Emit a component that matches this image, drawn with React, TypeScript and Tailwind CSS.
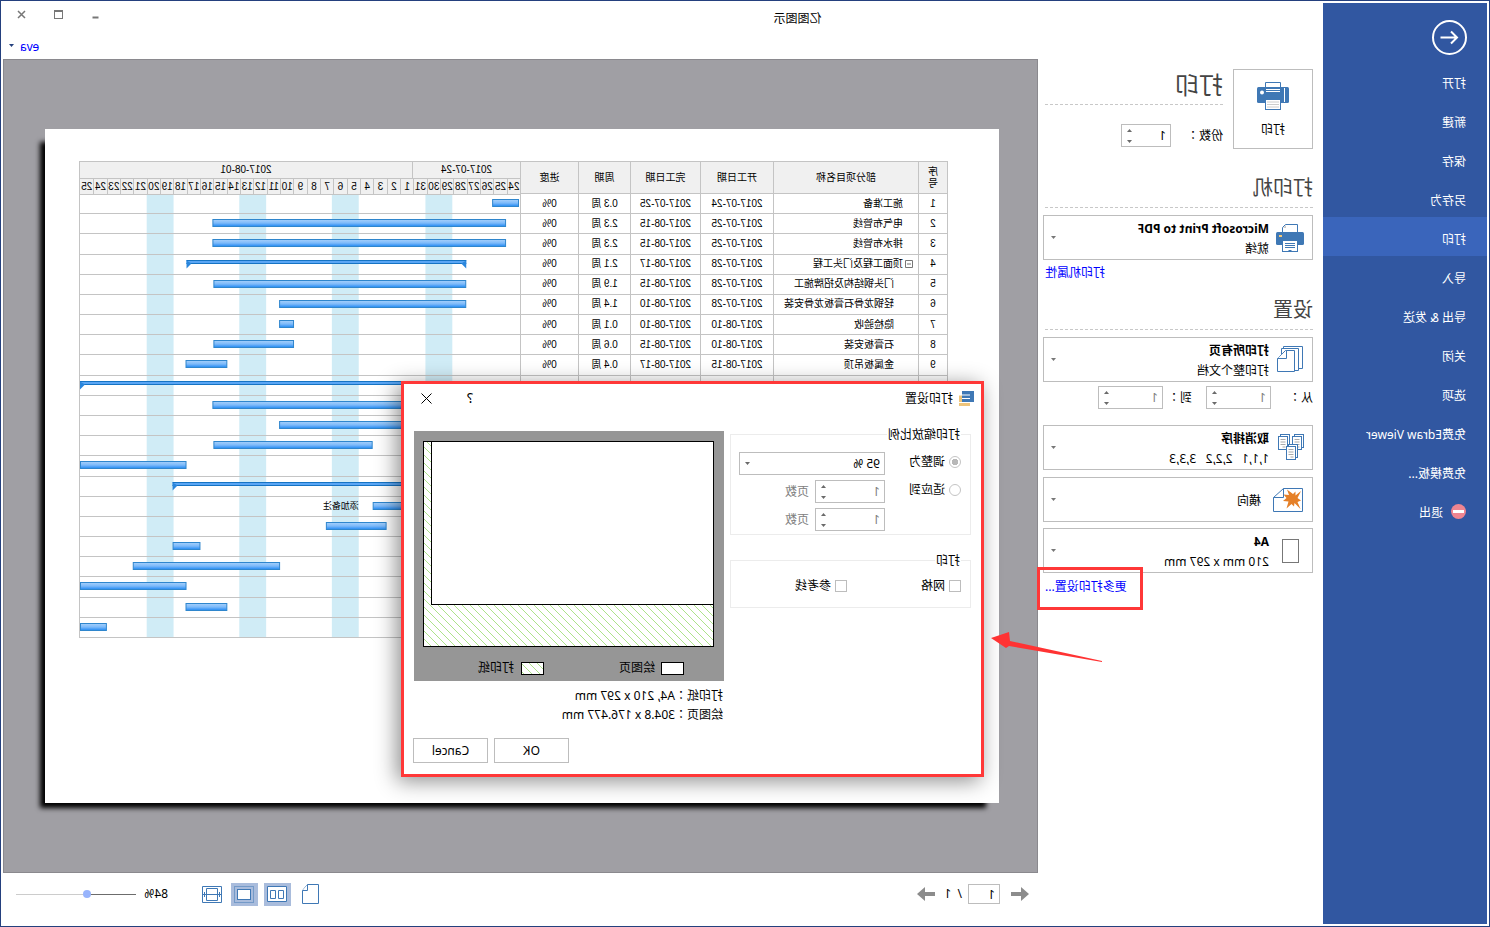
import React from "react";
import type { ReactNode } from "react";
import clsx from "clsx";

const menu = [
  "打开",
  "新建",
  "保存",
  "另存为",
  "打印",
  "导入",
  "导出 & 发送",
  "关闭",
  "选项",
  "免费Edraw Viewer",
  "免费模板...",
];

type Task = {
  name?: string;
  level?: number;
  start?: string;
  end?: string;
  weeks?: string;
  // bar limits, in chart units (442 = 33 days)
  bar: [number, number];
  group?: boolean;
  note?: string;
};

const tasks: Task[] = [
  { name: "施工准备", start: "2017-07-24", end: "2017-07-25", weeks: "0.3 周", bar: [1, 28] },
  { name: "电气布管线", start: "2017-07-25", end: "2017-08-15", weeks: "2.3 周", bar: [14, 309] },
  { name: "排水布管线", start: "2017-07-25", end: "2017-08-15", weeks: "2.3 周", bar: [14, 309] },
  { name: "顶面工程及门头工程", start: "2017-07-28", end: "2017-08-17", weeks: "2.1 周", bar: [54, 335], group: true },
  { name: "门头钢结构及招牌施工", level: 1, start: "2017-07-28", end: "2017-08-15", weeks: "1.9 周", bar: [54, 308] },
  { name: "轻钢龙骨石膏板龙骨安装", level: 1, start: "2017-07-28", end: "2017-08-10", weeks: "1.4 周", bar: [54, 242] },
  { name: "隐检验收", level: 1, start: "2017-08-10", end: "2017-08-10", weeks: "0.1 周", bar: [227, 242] },
  { name: "石膏板安装", level: 1, start: "2017-08-10", end: "2017-08-15", weeks: "0.6 周", bar: [227, 308] },
  { name: "金属板吊顶", level: 1, start: "2017-08-15", end: "2017-08-17", weeks: "0.4 周", bar: [294, 336] },
  { bar: [14, 442], group: true },
  { bar: [60, 309] },
  { bar: [60, 242] },
  { bar: [148, 308] },
  { bar: [335, 442] },
  { bar: [100, 349], group: true },
  { bar: [100, 148], note: "添加备注" },
  { bar: [134, 195] },
  { bar: [321, 349] },
  { bar: [241, 389] },
  { bar: [335, 442] },
  { bar: [294, 336] },
  { bar: [415, 442] },
];

const days = [
  ...Array.from({ length: 8 }, (_, i) => 24 + i),
  ...Array.from({ length: 25 }, (_, i) => 1 + i),
];

const weekends = [68, 162, 255, 348];

const Caret = ({ up, className }: { up?: boolean; className?: string }) => (
  <svg viewBox="0 0 5 3" className={clsx("w-[5px] h-[3px]", className)}>
    <path d={up ? "M0 3L2.5 0L5 3Z" : "M0 0H5L2.5 3Z"} fill="currentColor" />
  </svg>
);

const Spin = ({
  id,
  label,
  className,
  disabled,
}: {
  id: string;
  label?: string;
  className: string;
  disabled?: boolean;
}) => (
  <div
    className={clsx(
      "flex h-[23px] shrink-0 border border-[#bdbdbd] bg-white",
      className
    )}
  >
    <input
      id={id}
      aria-label={label}
      type="number"
      defaultValue={1}
      className={clsx(
        "min-w-0 flex-1 pl-1 outline-none [appearance:textfield] [&::-webkit-inner-spin-button]:appearance-none",
        disabled ? "text-[#808080]" : "text-black"
      )}
    />
    <div className="flex w-4 flex-col items-center justify-between py-[3px] text-[#6a6a6a]">
      <button aria-label="增加" className="flex h-1 w-4 items-center justify-center">
        <Caret up />
      </button>
      <button aria-label="减少" className="flex h-1 w-4 items-center justify-center">
        <Caret />
      </button>
    </div>
  </div>
);

const Combo = ({
  icon,
  title,
  text,
  className,
}: {
  icon: ReactNode;
  title?: string;
  text?: string;
  className?: string;
}) => (
  <button
    aria-haspopup="listbox"
    className={clsx(
      "flex h-[45px] w-full items-center border border-[#bdbdbd] bg-white pr-[7px] text-left",
      className
    )}
  >
    <span className={clsx("flex justify-center", title ? "w-[43px]" : "w-[51px] pr-1")}>
      {icon}
    </span>
    <span className="flex-1 pt-[2px] leading-5">
      {title && <span className="block font-bold">{title}</span>}
      {text && <span className="block whitespace-pre">{text}</span>}
    </span>
    <Caret className="text-[#777]" />
  </button>
);

const Heading = ({ children, className }: { children: ReactNode; className: string }) => (
  <h2
    className={clsx(
      "mr-[2px] h-9 border-b border-dashed border-[#c8c8c8] text-xl leading-8 text-[#444]",
      className
    )}
  >
    {children}
  </h2>
);

const PrinterLarge = () => (
  <svg viewBox="0 0 32 28" className="h-7 w-8">
    <path d="M8.5 6V.5H23.5V6" fill="#fff" stroke="#3f78b5" />
    <rect y="5" width="32" height="16" rx="1.5" fill="#3f78b5" />
    <path d="M4.5 6V20M9 7.5H23M9 9.5H23" stroke="#fff" />
    <circle cx="27" cy="10.5" r="2" fill="#fff" />
    <rect x="8.5" y="17.5" width="15" height="10" fill="#fff" stroke="#3f78b5" />
    <path d="M10 20H22M10 22.5H22M10 25H22" stroke="#ccc" />
  </svg>
);

const PrinterSmall = () => (
  <svg viewBox="0 0 28 28" className="size-7">
    <path d="M6.5 9V.5H18.5L21.5 3.5V9" fill="#fff" stroke="#3f78b5" />
    <path d="M18 1V4H21Z" fill="#ccc" />
    <rect y="8" width="28" height="13" rx="1.5" fill="#3f78b5" />
    <rect x="22" y="11" width="3" height="2" fill="#f5c878" />
    <rect x="6.5" y="16.5" width="15" height="11" fill="#fff" stroke="#3f78b5" />
    <path d="M9 19.5H19M9 21.5H19M9 23.5H19" stroke="#3f78b5" />
    <path d="M12 26H16L14 28Z" fill="#3f78b5" />
  </svg>
);

const Pages = () => (
  <svg viewBox="0 0 26 27" className="h-[27px] w-[26px]" fill="#fff" stroke="#3f78b5">
    <path d="M.5 .5H19.5V22.5H.5Z" />
    <path d="M4.5 2.5H21.5V24.5H4.5Z" />
    <path d="M8.5 4.5H17.5L25.5 12.5V25.5H8.5Z" />
    <path d="M16.5 4.5V12.5H25.5" />
  </svg>
);

const Collate = () => (
  <svg viewBox="0 0 27 27" className="size-[27px]" fill="#fff" stroke="#3f78b5">
    {[
      [0.5, 0.5],
      [14.5, 0.5],
      [6.5, 10.5],
    ].map(([x, y]) => (
      <g key={x}>
        <rect x={x} y={y} width="9" height="13" />
        <rect x={x + 2} y={y + 2} width="9" height="13" />
        <path
          d={`M${x + 4} ${y + 5}h5M${x + 4} ${y + 7.5}h5M${x + 4} ${y + 10}h5M${x + 4} ${y + 12.5}h3`}
          stroke="#aaa"
        />
      </g>
    ))}
  </svg>
);

const Landscape = () => (
  <svg viewBox="0 0 30 24" className="h-6 w-[30px]">
    <path d="M.5 .5H19.5L29.5 9.5V23.5H.5Z" fill="#fff" stroke="#3f78b5" />
    <path d="M19.5 .5V9.5H29.5" fill="none" stroke="#3f78b5" />
    <path
      d="M2 3L7.5 7.5L7.500 3.500L10 6L16 1.500L14 7L19.500 6.500L16.500 10L20 13L14.500 13.500L16.500 20.500L11.500 16L9 18.500L8.500 15L2.500 21L5.500 14L2 12.500L5.500 10Z"
      fill="#e58028"
    />
  </svg>
);

const Sidebar = () => (
  <nav className="w-[164px] shrink-0 bg-[#3157a1] text-white">
    <div className="h-[58px] pt-[17px] pl-5">
      <button aria-label="返回" className="block">
        <svg viewBox="0 0 35 35" className="size-[35px]" fill="none" stroke="#fff">
          <circle cx="17.5" cy="17.5" r="16.5" strokeWidth="2" />
          <path d="M26.500 17.5H10M16 11.5L10 17.5L16 23.5" strokeWidth="2" />
        </svg>
      </button>
    </div>
    {menu.map((item) => (
      <div key={item} className={clsx("h-[39px]", item === "打印" && "bg-[#3a65bb]")}>
        <a href="#" className="flex h-[39px] items-center pt-[6px] pl-[21px]">
          {item}
        </a>
      </div>
    ))}
    <a href="#" className="flex h-[39px] items-center gap-2 pt-[6px] pl-[21px]">
      <svg viewBox="0 0 15 15" className="mb-[2px] size-[15px]">
        <circle cx="7.5" cy="7.5" r="7.5" fill="#ee8591" />
        <rect x="2" y="6" width="11" height="3" fill="#fff" />
      </svg>
      退出
    </a>
  </nav>
);

const TitleBar = () => (
  <header className="h-14">
    <div className="flex h-[30px] items-center pr-[14px] pl-[38%]">
      <h1 className="flex-1 pt-[2px]">亿图图示</h1>
      <div className="flex items-center gap-7 pb-2 text-[#777]">
        <button aria-label="最小化">
          <svg viewBox="0 0 9 9" className="size-[9px]">
            <path d="M1.5 7.5H7.5" stroke="currentColor" strokeWidth="2" />
          </svg>
        </button>
        <button aria-label="最大化">
          <svg viewBox="0 0 9 9" className="size-[9px]" fill="none" stroke="currentColor">
            <rect x=".5" y=".5" width="8" height="8" />
            <path d="M0 1H9" strokeWidth="2" />
          </svg>
        </button>
        <button aria-label="关闭窗口">
          <svg viewBox="0 0 9 9" className="size-[9px]" stroke="currentColor" strokeWidth="1.5">
            <path d="M1 1L8 8M8 1L1 8" />
          </svg>
        </button>
      </div>
    </div>
    <div className="flex justify-end pr-[6px]">
      <button className="flex h-7 items-center gap-[6px] text-[#00f]">
        eva
        <Caret className="mb-1 text-[#24407e]" />
      </button>
    </div>
  </header>
);

const Settings = () => (
  <section className="w-[285px] shrink-0 pt-[10px] pr-[5px] pl-[10px]">
    <div className="flex gap-[10px]">
      <button className="flex size-20 flex-col items-center border border-[#bdbdbd] pt-3">
        <PrinterLarge />
        <span className="mt-3">打印</span>
      </button>
      <div className="flex-1">
        <h2 className="mr-[2px] h-9 border-b border-dashed border-[#c8c8c8] text-2xl leading-8 text-[#444]">
          打印
        </h2>
        <div className="mt-[19px] flex items-center">
          <label
            htmlFor="copies"
            className="w-[52px] font-['Noto_Sans','Noto_Sans_CJK_TC',sans-serif]"
          >
            份数：
          </label>
          <Spin id="copies" className="w-[50px]" />
        </div>
      </div>
    </div>

    <Heading className="mt-[23px]">打印机</Heading>
    <Combo
      className="mt-[7px]"
      icon={<PrinterSmall />}
      title="Microsoft Print to PDF"
      text="就绪"
    />
    <div className="flex h-6 items-center justify-end pt-[2px] pr-[2px]">
      <a href="#" className="text-[#00f]">
        打印机属性
      </a>
    </div>

    <Heading className="mt-[10px]">设置</Heading>
    <Combo className="mt-[7px]" icon={<Pages />} title="打印所有页" text="打印整个文档" />
    <div className="mt-1 flex items-center font-['Noto_Sans','Noto_Sans_CJK_TC',sans-serif]">
      <label htmlFor="from" className="w-[42px]">
        从：
      </label>
      <Spin id="from" className="w-[65px]" disabled />
      <label htmlFor="to" className="w-[43px] pl-[14px] whitespace-nowrap">
        到：
      </label>
      <Spin id="to" className="w-[65px]" disabled />
    </div>
    <Combo
      className="mt-4"
      icon={<Collate />}
      title="取消排序"
      text="1,1,1   2,2,2   3,3,3"
    />
    <Combo className="mt-[7px]" icon={<Landscape />} text="横向" />
    <Combo
      className="mt-[6px]"
      icon={
        <svg viewBox="0 0 17 24" className="h-6 w-[17px]">
          <rect x=".5" y=".5" width="16" height="23" fill="#fff" stroke="#777" />
        </svg>
      }
      title="A4"
      text="210 mm x 297 mm"
    />
    <div className="flex h-7 items-center justify-end pr-[2px]">
      <a href="#" className="relative text-[#00f]">
        更多打印设置...
        <span className="absolute -top-3 -right-2 z-10 h-[43px] w-[106px] border-3 border-[#ff3838]" />
      </a>
    </div>
  </section>
);

const TaskTable = () => (
  <table className="h-[477px] w-[427px] shrink-0 table-fixed border-collapse text-center [&_td]:border [&_td]:border-[#c4c4c4] [&_td]:p-0 [&_th]:border [&_th]:border-[#c4c4c4] [&_th]:p-0">
    <colgroup>
      <col className="w-[29px]" />
      <col className="w-[145px]" />
      <col className="w-[73px]" />
      <col className="w-[70px]" />
      <col className="w-[52px]" />
      <col className="w-[58px]" />
    </colgroup>
    <thead>
      <tr className="h-8 bg-[#f0f0f0] leading-3">
        <th className="px-2 font-normal">
          序<br />号
        </th>
        <th className="font-normal">部分项目名称</th>
        <th className="font-normal">开工日期</th>
        <th className="font-normal">完工日期</th>
        <th className="font-normal">周期</th>
        <th className="font-normal">进度</th>
      </tr>
    </thead>
    <tbody>
      {tasks.map((t, i) => (
        <tr key={i} className="h-5 leading-3">
          <td>{t.name && i + 1}</td>
          <td>
            <div
              className={clsx(
                "flex items-center",
                t.level ? "pl-6" : t.group ? "pl-[5px]" : "pl-[15px]"
              )}
            >
              {t.name && t.group && (
                <svg viewBox="0 0 8 8" className="mr-[2px] size-2" fill="none" stroke="#777">
                  <path d="M.5 .5H7.5V7.5H.5ZM2 4H6" />
                </svg>
              )}
              {t.name}
            </div>
          </td>
          <td>{t.start}</td>
          <td>{t.end}</td>
          <td>{t.weeks}</td>
          <td>{t.name && "0%"}</td>
        </tr>
      ))}
    </tbody>
  </table>
);

const rowHeight = 444 / tasks.length;

const Chart = () => (
  <div className="min-w-0 flex-1 border-t border-r border-[#c4c4c4]">
    <div className="flex h-4 bg-[#f0f0f0] text-center leading-4">
      <div className="w-[108px] border-r border-[#c4c4c4]">2017-07-24</div>
      <div className="flex-1">2017-08-01</div>
    </div>
    <div className="grid h-4 grid-cols-[repeat(33,minmax(0,1fr))] border-t border-[#c4c4c4] bg-[#f0f0f0] leading-4">
      {days.map((d, i) => (
        <div
          key={i}
          className="flex justify-center border-r border-[#c4c4c4] last:border-r-0"
        >
          {d}
        </div>
      ))}
    </div>
    <svg viewBox="0 0 442 444" preserveAspectRatio="none" className="block h-[444px] w-full">
      <defs>
        <linearGradient id="bar" x1="0" y1="0" x2="0" y2="1">
          <stop offset="0" stopColor="#a6d0fb" />
          <stop offset=".5" stopColor="#7dbafa" />
          <stop offset="1" stopColor="#2088f2" />
        </linearGradient>
      </defs>
      {weekends.map((x) => (
        <rect key={x} x={x} y="0" width="27" height="444" fill="#d0ecf6" />
      ))}
      {tasks.map((t, i) => (
        <path
          key={i}
          d={`M0 ${Math.round(rowHeight * i) + (i === 0 ? 0.5 : -0.5)}H442`}
          stroke="#c4c4c4"
        />
      ))}
      <path d="M0 443.5H442" stroke="#c4c4c4" />
      {tasks.map((t, i) => {
        const y = Math.round(rowHeight * i) + 5.5;
        const [a, b] = t.bar;
        if (t.group) {
          return (
            <g key={i}>
              <rect x={a} y={y - 0.5} width={b - a} height="4" fill="#5aa6f5" />
              <path d={`M${a} ${y}H${b}M${a} ${y + 3}H${b}`} stroke="#1673c4" />
              <path
                d={`M${a} ${y}V${y + 8}L${a + 5} ${y + 3}ZM${b} ${y}V${y + 8}L${b - 5} ${y + 3}Z`}
                fill="#2a86dc"
              />
            </g>
          );
        }
        return (
          <g key={i}>
            <rect
              x={a + 0.5}
              y={y}
              width={b - a - 1}
              height="7"
              fill="url(#bar)"
              stroke="#2f86cd"
            />
            {t.note && (
              <text x="162" y={y + 7} fontSize="9">
                {t.note}
              </text>
            )}
          </g>
        );
      })}
    </svg>
  </div>
);

const Hatch = ({ id }: { id: string }) => (
  <defs>
    <pattern id={id} width="8" height="8" patternUnits="userSpaceOnUse">
      <path d="M0 8L8 0M-1 1L1 -1M7 9L9 7" stroke="#98dc6c" strokeWidth=".8" />
    </pattern>
  </defs>
);

const PrintDialog = () => (
  <div
    role="dialog"
    aria-label="打印设置"
    className="absolute top-[321px] left-[53px] h-[396px] w-[583px] border-3 border-[#ff3838] bg-white pt-[2px] pr-1 pl-[7px] shadow-[4px_4px_20px_rgba(0,0,0,0.45)]"
  >
    <div className="flex h-6 items-center">
      <svg viewBox="0 0 15 15" className="size-[15px]">
        <path d="M4 4H15V15H4Z" fill="#eec47a" />
        <path d="M0 0H12V11H0Z" fill="#3f78b5" />
        <path d="M4 4H15M4 7.5H12M4 11.5H15" stroke="#fff" />
      </svg>
      <span className="flex-1 pt-[2px] pl-[6px]">打印设置</span>
      <button aria-label="帮助" className="w-6 text-sm">
        ?
      </button>
      <button aria-label="关闭" className="ml-3 flex w-[38px] justify-center">
        <svg viewBox="0 0 11 11" className="size-[11px]" stroke="#000">
          <path d="M.5 .5L10.5 10.5M10.5 .5L.5 10.5" />
        </svg>
      </button>
    </div>

    <div className="mt-[18px] flex">
      <div className="w-[250px] shrink-0 pl-[3px]">
        <fieldset className="h-[107px] w-[241px] border border-[#ececec] pl-[9px]">
          <legend className="h-3 px-[1px] leading-[14px]">打印缩放比例</legend>
          <div className="mt-3 grid grid-cols-[76px_146px] gap-y-[5px]">
            <label className="flex h-[23px] items-center gap-1 pb-1">
              <input
                type="radio"
                name="scale"
                defaultChecked
                className="size-3 appearance-none rounded-full border border-[#c4c4c4] bg-white checked:bg-[radial-gradient(circle,#b8b8b8_3px,#fff_3px)]"
              />
              调整为
            </label>
            <div className="relative flex">
              <select
                aria-label="调整为"
                className="h-[23px] w-full appearance-none border border-[#bdbdbd] bg-white pl-1 outline-none"
              >
                <option>95 %</option>
              </select>
              <Caret className="absolute top-[10px] right-[6px] text-[#6a6a6a]" />
            </div>
            <label className="flex h-[23px] items-center gap-1 pb-1">
              <input
                type="radio"
                name="scale"
                className="size-3 appearance-none rounded-full border border-[#c4c4c4] bg-white"
              />
              适应到
            </label>
            <div className="flex items-center gap-[6px] text-[#808080]">
              <Spin id="pages-x" className="w-[70px]" disabled />
              <label htmlFor="pages-x">页数</label>
            </div>
            <div className="col-start-2 flex items-center gap-[6px] text-[#808080]">
              <Spin id="pages-y" className="w-[70px]" disabled />
              <label htmlFor="pages-y">页数</label>
            </div>
          </div>
        </fieldset>
        <fieldset className="mt-[19px] h-[54px] w-[241px] border border-[#ececec] pl-[9px]">
          <legend className="h-3 px-[1px] leading-[14px]">打印</legend>
          <div className="mt-3 flex">
            {["网格", "参考线"].map((item) => (
              <label key={item} className="flex w-[114px] items-center gap-1">
                <input
                  type="checkbox"
                  className="size-3 appearance-none border border-[#bdbdbd] bg-white"
                />
                {item}
              </label>
            ))}
          </div>
        </fieldset>
      </div>

      <div className="mt-[3px] w-[310px]">
        <div className="h-[250px] bg-[#969696] pt-[10px] pl-[10px]">
          <svg viewBox="0 0 291 206" className="h-[206px] w-[291px]">
            <Hatch id="hatch" />
            <rect x=".5" y=".5" width="290" height="205" fill="#fff" />
            <rect x=".5" y=".5" width="290" height="205" fill="url(#hatch)" stroke="#000" />
            <rect x=".5" y=".5" width="282" height="163" fill="#fff" stroke="#000" />
          </svg>
          <div className="mt-[11px] flex h-5 items-center pl-[30px]">
            <span className="mr-[6px] h-[13px] w-[23px] border border-black bg-white" />
            <span className="w-[111px]">绘图页</span>
            <svg viewBox="0 0 23 13" className="mr-[7px] h-[13px] w-[23px]">
              <Hatch id="hatch-key" />
              <rect width="23" height="13" fill="#fff" />
              <rect x=".5" y=".5" width="22" height="12" fill="url(#hatch-key)" stroke="#000" />
            </svg>
            <span>打印纸</span>
          </div>
        </div>
        <div className="mt-[5px] pl-[1px] font-['Noto_Sans','Noto_Sans_CJK_TC',sans-serif] leading-[19px]">
          <p>打印纸：A4, 210 x 297 mm</p>
          <p>绘图页：304.8 x 176.477 mm</p>
        </div>
        <div className="mt-[14px] -mr-[1px] flex justify-end gap-[6px]">
          <button className="h-[25px] w-[75px] border border-[#bdbdbd]">OK</button>
          <button className="h-[25px] w-[75px] border border-[#bdbdbd]">Cancel</button>
        </div>
      </div>
    </div>
  </div>
);

const Preview = () => (
  <div className="relative flex flex-1 border border-[#8a898e] bg-[#a09fa4] py-[69px] pr-[41px] pl-[38px]">
    <div className="flex-1 bg-white pt-8 pr-[34px] pl-[51px] shadow-[9px_9px_5px_-4px_#000]">
      <div className="flex font-['Liberation_Sans','Noto_Sans_CJK_SC',sans-serif] text-[10px]">
        <TaskTable />
        <Chart />
      </div>
    </div>
    <PrintDialog />
    <svg viewBox="0 0 112 32" className="absolute top-[571px] -left-[66px] z-10 h-8 w-28">
      <path d="M1 30L93 10L94 1L112 7L97 17L94 15L1 31Z" fill="#f33" />
    </svg>
  </div>
);

const StatusBar = () => (
  <footer className="flex h-[51px] items-center pr-[13px] pb-[9px] pl-[9px]">
    <button aria-label="上一页">
      <svg viewBox="0 0 18 14" className="h-[14px] w-[18px]" fill="#8c8c8c">
        <path d="M0 7L8 0V5H18V9H8V14Z" />
      </svg>
    </button>
    <input
      aria-label="页码"
      defaultValue="1"
      className="ml-[11px] h-5 w-8 border border-[#bdbdbd] pl-1 outline-none"
    />
    <span className="w-8 pl-[6px] whitespace-pre">/  1</span>
    <button aria-label="下一页">
      <svg viewBox="0 0 18 14" className="ml-[1px] h-[14px] w-[18px]" fill="#8c8c8c">
        <path d="M18 7L10 0V5H0V9H10V14Z" />
      </svg>
    </button>
    <div className="ml-auto flex items-center">
      <button aria-label="单页">
        <svg viewBox="0 0 17 20" className="h-5 w-[17px]" fill="#fff" stroke="#3f78b5">
          <path d="M.5 .5H11.5L16.5 6.5V19.5H.5Z" />
          <path d="M11.5 .5V6.5H16.5" />
        </svg>
      </button>
      <button
        aria-label="双页"
        className="ml-[11px] flex h-[23px] w-[27px] items-center justify-center bg-[#a9bcdc]"
      >
        <svg viewBox="0 0 20 16" className="h-4 w-5" fill="#fff" stroke="#3f78b5">
          <path d="M.5 .5H19.5V15.5H.5ZM3.5 4.5H8.5V12.5H3.5ZM11.5 4.5H16.5V12.5H11.5Z" />
        </svg>
      </button>
      <button
        aria-label="整页"
        className="ml-[6px] flex h-[23px] w-[27px] items-center justify-center bg-[#a9bcdc]"
      >
        <svg viewBox="0 0 20 17" className="h-[17px] w-5" fill="none" stroke="#3f78b5">
          <rect x=".5" y=".5" width="19" height="16" strokeDasharray="1 1" />
          <rect x="3.5" y="3.5" width="13" height="10" fill="#fff" />
        </svg>
      </button>
      <button aria-label="页宽" className="ml-[9px]">
        <svg viewBox="0 0 20 17" className="h-[17px] w-5" fill="none" stroke="#3f78b5">
          <path d="M.5 .5H19.5V16.5H.5ZM4.5 2.5H15.5V14.5H4.5ZM1 8.5H19M2.5 6V11M17.5 6V11" />
        </svg>
      </button>
      <span className="w-[66px] pl-[34px]">84%</span>
      <input
        type="range"
        aria-label="缩放"
        defaultValue={40}
        className="h-2 w-[120px] appearance-none bg-[linear-gradient(to_right,#6c6c6c_40%,#ccc_40%)] bg-[length:100%_1px] bg-center bg-no-repeat [&::-webkit-slider-thumb]:size-2 [&::-webkit-slider-thumb]:appearance-none [&::-webkit-slider-thumb]:rounded-full [&::-webkit-slider-thumb]:bg-[#98b4fc]"
      />
    </div>
  </footer>
);

const App = () => {
  return (
    // the whole window is flipped left to right
    <div className="flex min-h-screen -scale-x-100 border border-[#24407e] bg-white p-[2px] font-['Noto_Sans','Noto_Sans_CJK_SC',sans-serif] text-xs text-black">
      <Sidebar />
      <div className="flex min-w-0 flex-1 flex-col">
        <TitleBar />
        <div className="flex flex-1">
          <Settings />
          <main className="flex min-w-0 flex-1 flex-col">
            <Preview />
            <StatusBar />
          </main>
        </div>
      </div>
    </div>
  );
};

export default App;
